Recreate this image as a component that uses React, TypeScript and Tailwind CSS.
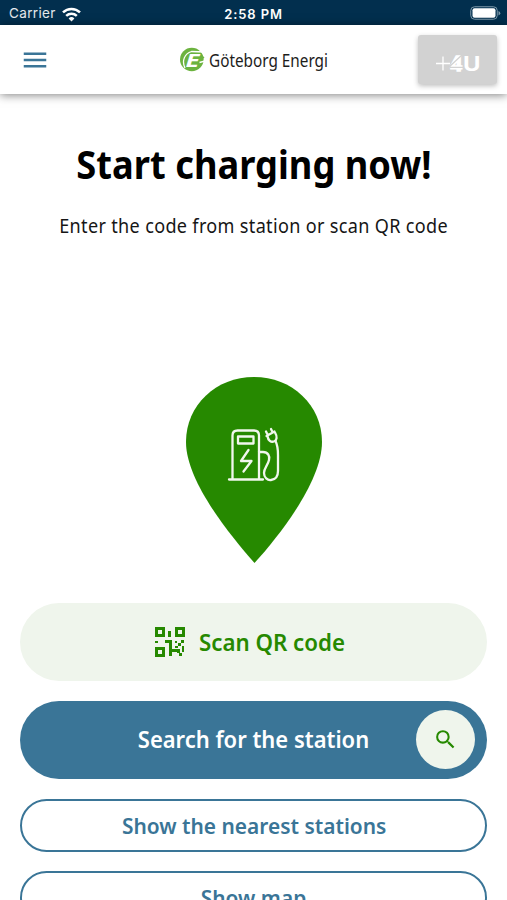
import { ReactNode } from "react";
import { MdMenu, MdSearch } from "react-icons/md";

function StatusBar() {
  return (
    <div className="grid h-[25px] shrink-0 grid-cols-3 items-center bg-[#022f4e] text-white font-['Inter',sans-serif] text-[13px]">
      <div className="flex items-center gap-1.5 pl-[9px] pt-[3px]">
        <span className="text-[13.5px] tracking-[0.35px] leading-none text-white/90">Carrier</span>
        <svg width="19" height="15" viewBox="0 0 19 15" fill="none" stroke="currentColor" strokeWidth="2.5">
          <path d="M1 5.4a12.2 12.2 0 0 1 17 0" />
          <path d="M4.2 8.9a7.7 7.7 0 0 1 10.6 0" />
          <path d="M9.5 14.4 6.6 11.5a4.2 4.2 0 0 1 5.8 0z" fill="currentColor" stroke="none" />
        </svg>
      </div>
      <span className="pt-[3px] text-center font-semibold leading-none tracking-[0.9px]">2:58 PM</span>
      <div className="flex justify-end pr-[6px]">
        <svg width="31" height="14" viewBox="0 0 31 14">
          <rect x="0.75" y="0.75" width="26.5" height="12.5" rx="3.8" fill="none" stroke="#7e99aa" strokeWidth="1" />
          <rect x="2.5" y="2.3" width="23" height="9.4" rx="2" fill="#fff" />
          <path d="M28.5 5v4.4q1.8-.8 1.8-2.2T28.5 5z" fill="#7e99aa" />
        </svg>
      </div>
    </div>
  );
}

function Header() {
  return (
    <header className="grid h-[69px] shrink-0 grid-cols-[180px_1fr_100px] items-center bg-white shadow-[0_1px_9px_rgba(0,0,0,0.5)]">
      <button className="ml-5 w-[30px] text-[#3a7597]" aria-label="Menu">
        <MdMenu size={30} />
      </button>
      <div className="flex items-center gap-1">
        <svg width="25" height="25" viewBox="0 0 25 25" className="shrink-0">
          <circle cx="11.8" cy="12.5" r="11.8" fill="#6cb33f" />
          <path d="M5 21C1.5 14 4.5 6.5 11.5 4.5L25 5" fill="none" stroke="#fff" strokeWidth="1.3" />
          <path d="M18.5 9.5h2V7l4 3.5-4 3.5v-2h-2z" fill="#6cb33f" />
          <path d="M19.5 15.5 25 14" stroke="#fff" strokeWidth="1.3" />
          <text x="5.5" y="19.5" fontSize="18" fontWeight="700" fontStyle="italic" fontFamily="Open Sans, sans-serif" fill="#fff" textLength="14" lengthAdjust="spacingAndGlyphs">E</text>
        </svg>
        <span className="origin-left scale-x-[0.875] whitespace-nowrap text-[17.5px] leading-[30px] text-[#1d1d1b]">
          Göteborg Energi
        </span>
      </div>
      <button className="mr-[10px] flex h-[49px] w-[79px] items-center justify-center justify-self-end rounded-[3px] bg-[#d2d2d2] shadow-[0_2px_5px_rgba(0,0,0,0.25)]">
        <svg width="79" height="49" viewBox="0 0 79 49" fill="#fff">
          <path d="M18 28.5h14M25 21.5v14" stroke="#fff" strokeWidth="1.3" />
          <text x="32" y="35.5" fontSize="19.5" fontWeight="800" fontFamily="Inter, sans-serif" stroke="#fff" strokeWidth="1.5" textLength="12.5" lengthAdjust="spacingAndGlyphs">4</text>
          <path d="m31 32 13-12M32 32.3h13" stroke="#d2d2d2" strokeWidth="1.3" />
          <text x="45" y="35.5" fontSize="20" fontWeight="700" fontFamily="Inter, sans-serif" textLength="17.5" lengthAdjust="spacingAndGlyphs">U</text>
        </svg>
      </button>
    </header>
  );
}

function StationPin() {
  return (
    <svg width="138" height="188" viewBox="0 0 138 188">
      <path d="M69.5 187C44 158 1 105 1 66C1 29 31 1 69 1s68 28 68 65c0 39-42 93-67.5 121z" fill="#268900" />
      <g fill="none" stroke="#f1f7ed" strokeWidth="2.3" strokeLinecap="round" strokeLinejoin="round">
        <path d="M44 103.5h34M47.5 103V59.5q0-5 5-5H69q5 0 5 5V103" />
        <path d="M53 60.5h15.5v7H53z" />
        <path d="M63.5 74 56 85h10.5L58.5 95.5" />
        <path d="M74 76h4c5 0 7 4 6 8-1 5-5 8-5 13 0 4.5 3.5 7.5 7 7 4.5-.5 7-4 7-9V79c0-6-.5-10-2.5-14" />
        <path d="m81.5 60 8-4.5M82.5 60c.5 4.5 3.5 6.5 6.5 5.5s3.5-5 1-9M82.5 58.5l-1.5-3M87.5 56 86 53" />
      </g>
    </svg>
  );
}

function QrIcon() {
  return (
    <svg width="30" height="30" viewBox="0 0 30 30" fill="currentColor" shapeRendering="crispEdges">
      <g fill="none" stroke="currentColor" strokeWidth="3">
        <path d="M1.5 1.5h7v7h-7zM21.5 1.5h7v7h-7zM1.5 21.5h7v7h-7z" />
      </g>
      <path d="M13 4h3v6h-3zM0 14h3v2H0zM10 13h7v7h-3v-4h-4zM20 14h2v2h-2zM26 13h3v3h-3zM23 16h3v3h-3zM20 19h3v2h-3zM27 19h2v6h-2zM14 20h3v2h5v3h-5v4h-3zM24 26h3v3h-3zM22 22h3v4h-3z" />
    </svg>
  );
}

function OutlineButton({ children }: { children: ReactNode }) {
  return (
    <button className="flex h-[53px] w-full shrink-0 items-center justify-center rounded-full border-2 border-[#3a7597] text-[22px] font-semibold text-[#3a7597]">
      <span className="scale-x-95 whitespace-nowrap">{children}</span>
    </button>
  );
}

export default function App() {
  return (
    <div className="flex h-[900px] w-full flex-col overflow-hidden bg-white font-['Noto_Sans',sans-serif]">
      <StatusBar />
      <Header />
      <main className="flex flex-col items-center pl-[20.4px] pr-[19.6px]">
        <h1 className="mt-[45px] scale-x-[0.93] whitespace-nowrap text-[39px] font-bold leading-[50px] text-black">Start charging now!</h1>
        <p className="mt-[22px] scale-x-[0.95] whitespace-nowrap text-[19px] tracking-[0.35px] leading-[30px] text-[#161616]">
          Enter the code from station or scan QR code
        </p>
        <div className="mt-[135px]">
          <StationPin />
        </div>
        <div className="mt-[38.5px] flex w-full flex-col gap-5">
          <button className="flex h-[78px] w-full shrink-0 items-center justify-center gap-[14px] rounded-full bg-[#eff5ec] pr-[11px] text-[22.5px] font-semibold text-[#268900]">
            <QrIcon />
            <span className="-mr-1 origin-left scale-x-[0.99] pt-[3px]">Scan QR code</span>
          </button>
          <button className="grid h-[78px] w-full shrink-0 grid-cols-[71px_1fr_71px] items-center rounded-full bg-[#3a7597] text-[23px] font-semibold text-white">
            <span className="col-start-2 scale-x-[0.955] whitespace-nowrap">Search for the station</span>
            <span className="flex size-[59px] items-center justify-center rounded-full bg-[#eff5ec] text-[#268900]">
              <MdSearch size={25} />
            </span>
          </button>
          <div className="flex flex-col gap-[19px]">
            <OutlineButton>Show the nearest stations</OutlineButton>
            <OutlineButton>Show map</OutlineButton>
          </div>
        </div>
      </main>
    </div>
  );
}
